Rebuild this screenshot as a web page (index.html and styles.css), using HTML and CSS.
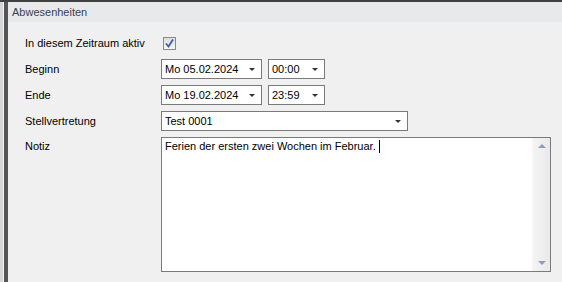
FILE: index.html
```html
<!DOCTYPE html>
<html>
<head>
    <meta charset="UTF-8">
    <title>Abwesenheiten</title>
    <link rel="stylesheet" href="styles.css">
</head>
<body>
<div class="window">
    <div class="edge"></div>
    <div class="bar"></div>
    <div class="panel">
        <div class="panel-head">Abwesenheiten</div>
        <div class="form">
            <div class="lbl">In diesem Zeitraum aktiv</div>
            <div class="ctl"><span class="check"><svg width="11" height="11" viewBox="0 0 11 11"><path d="M2 5.5 L4.5 8.5 L9 1.5" fill="none" stroke="#3d5fa8" stroke-width="1.8"/></svg></span></div>

            <div class="lbl">Beginn</div>
            <div class="ctl">
                <div class="combo date">Mo 05.02.2024<span class="caret"></span></div>
                <div class="combo time">00:00<span class="caret"></span></div>
            </div>

            <div class="lbl">Ende</div>
            <div class="ctl">
                <div class="combo date">Mo 19.02.2024<span class="caret"></span></div>
                <div class="combo time">23:59<span class="caret"></span></div>
            </div>

            <div class="lbl">Stellvertretung</div>
            <div class="ctl">
                <div class="combo wide">Test 0001<span class="caret"></span></div>
            </div>

            <div class="lbl lbl-top">Notiz</div>
            <div class="ctl">
                <div class="memo">
                    <div class="memo-text">Ferien der ersten zwei Wochen im Februar. <span class="cursor"></span></div>
                    <div class="scroll">
                        <span class="arrow up"></span>
                        <span class="arrow down"></span>
                    </div>
                </div>
            </div>
        </div>
    </div>
</div>
</body>
</html>
```

FILE: styles.css
```css
html,body{margin:0;padding:0;}
body{background:#f0f0f0;font:11px/13px "Liberation Sans",Arial,sans-serif;color:#000;}
.window{display:flex;height:282px;border-top:2px solid #424242;box-sizing:border-box;}
.edge{width:3px;background:#d6d6d6;border-right:1px solid #f4f4f4;}
.bar{width:4px;background:#555;}
.panel{flex:1;background:#f0f0f0;}
.panel-head{height:20px;line-height:20px;padding-left:4px;background:#e8e9ea;color:#3a3f4e;}
.form{display:grid;grid-template-columns:136px 1fr;grid-template-rows:20px 20px 20px 20px 135px;row-gap:6px;padding:11px 11px 0 17px;}
.lbl{display:flex;align-items:center;}
.lbl-top{align-items:flex-start;padding-top:3px;}
.ctl{display:flex;align-items:center;gap:6px;}
.check{width:11px;height:11px;margin-left:2px;border:1px solid #8b8b8b;background:linear-gradient(#dcdcdc,#f6f6f6);display:flex;}
.combo{position:relative;height:20px;line-height:18px;box-sizing:border-box;border:1px solid #7a7a7a;background:#fff;padding-left:3px;}
.date{width:101px;}
.time{width:57px;}
.wide{width:247px;}
.caret{position:absolute;right:6px;top:8px;width:0;height:0;border-left:3px solid transparent;border-right:3px solid transparent;border-top:3px solid #333;}
.memo{display:flex;width:390px;height:135px;box-sizing:border-box;border:1px solid #7a7a7a;background:#fff;align-self:stretch;}
.memo-text{flex:1;padding:2px 3px;}
.cursor{display:inline-block;width:1px;height:13px;background:#000;vertical-align:top;}
.scroll{width:17px;background:linear-gradient(90deg,#f4f4f4,#e9e9e9);border-left:1px solid #f7f7f7;display:flex;flex-direction:column;justify-content:space-between;align-items:center;padding:6px 0;}
.arrow{width:0;height:0;border-left:4px solid transparent;border-right:4px solid transparent;}
.up{border-bottom:4px solid #8e9cc4;}
.down{border-top:4px solid #8e9cc4;}
```
